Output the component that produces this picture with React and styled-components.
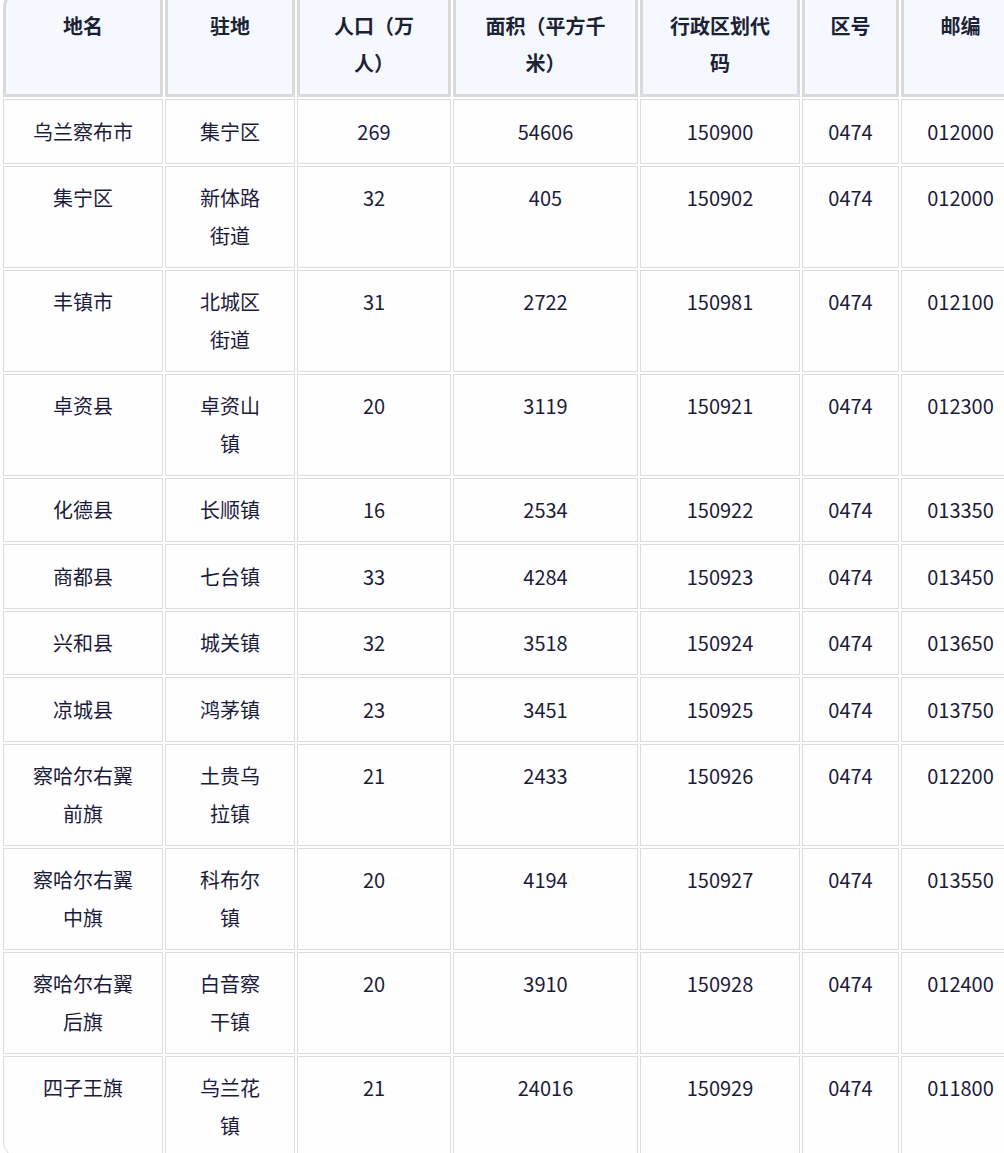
import React from 'react';
import styled, { createGlobalStyle } from 'styled-components';

const GlobalStyle = createGlobalStyle`
  html, body {
    margin: 0;
    padding: 0;
    overflow: hidden;
    background: #ffffff;
  }
`;

const Page = styled.div`
  width: 100%;
  height: 1153px;
  overflow: hidden;
  padding-left: 1px;
  box-sizing: border-box;
  font-family: "Noto Sans CJK SC", "Noto Sans", sans-serif;
`;

const Table = styled.table`
  table-layout: fixed;
  width: 1021px;
  border-collapse: separate;
  border-spacing: 2px;
  margin-top: -11px;
  font-size: 20px;
  line-height: 37.5px;

  tbody tr:last-child td:first-child {
    border-bottom-left-radius: 16px;
  }
`;

const HeadCell = styled.th`
  background: #f5f8ff;
  border: 3px solid #dadada;
  padding: 12.5px 6px;
  font-weight: 700;
  color: #1b2233;
  text-align: center;
  vertical-align: top;
  white-space: nowrap;
  overflow: hidden;

  &:first-child {
    border-top-left-radius: 16px;
  }
`;

const Cell = styled.td`
  background: #fefefe;
  border: 1px solid #dcdcdc;
  padding: 12.5px 6px;
  color: #1b1b3b;
  text-align: center;
  vertical-align: top;
  white-space: nowrap;
  overflow: hidden;
`;

const columns = [
  { width: 160, title: ['地名'] },
  { width: 130, title: ['驻地'] },
  { width: 154, title: ['人口（万', '人）'] },
  { width: 185, title: ['面积（平方千', '米）'] },
  { width: 160, title: ['行政区划代', '码'] },
  { width: 97, title: ['区号'] },
  { width: 119, title: ['邮编'] },
];

const rows = [
  [['乌兰察布市'], ['集宁区'], '269', '54606', '150900', '0474', '012000'],
  [['集宁区'], ['新体路', '街道'], '32', '405', '150902', '0474', '012000'],
  [['丰镇市'], ['北城区', '街道'], '31', '2722', '150981', '0474', '012100'],
  [['卓资县'], ['卓资山', '镇'], '20', '3119', '150921', '0474', '012300'],
  [['化德县'], ['长顺镇'], '16', '2534', '150922', '0474', '013350'],
  [['商都县'], ['七台镇'], '33', '4284', '150923', '0474', '013450'],
  [['兴和县'], ['城关镇'], '32', '3518', '150924', '0474', '013650'],
  [['凉城县'], ['鸿茅镇'], '23', '3451', '150925', '0474', '013750'],
  [['察哈尔右翼', '前旗'], ['土贵乌', '拉镇'], '21', '2433', '150926', '0474', '012200'],
  [['察哈尔右翼', '中旗'], ['科布尔', '镇'], '20', '4194', '150927', '0474', '013550'],
  [['察哈尔右翼', '后旗'], ['白音察', '干镇'], '20', '3910', '150928', '0474', '012400'],
  [['四子王旗'], ['乌兰花', '镇'], '21', '24016', '150929', '0474', '011800'],
];

// a value is either a plain string or a list of lines
const Lines = ({ value }) => {
  const parts = Array.isArray(value) ? value : [value];
  return parts.map((part, i) => (
    <React.Fragment key={i}>
      {i > 0 && <br />}
      {part}
    </React.Fragment>
  ));
};

const App = () => {
  return (
    <>
      <GlobalStyle />
      <Page>
        <Table>
          <colgroup>
            {columns.map((col, i) => (
              <col key={i} style={{ width: `${col.width}px` }} />
            ))}
          </colgroup>
          <thead>
            <tr>
              {columns.map((col, i) => (
                <HeadCell key={i}>
                  <Lines value={col.title} />
                </HeadCell>
              ))}
            </tr>
          </thead>
          <tbody>
            {rows.map((row, r) => (
              <tr key={r}>
                {row.map((value, c) => (
                  <Cell key={c}>
                    <Lines value={value} />
                  </Cell>
                ))}
              </tr>
            ))}
          </tbody>
        </Table>
      </Page>
    </>
  );
};

export default App;
